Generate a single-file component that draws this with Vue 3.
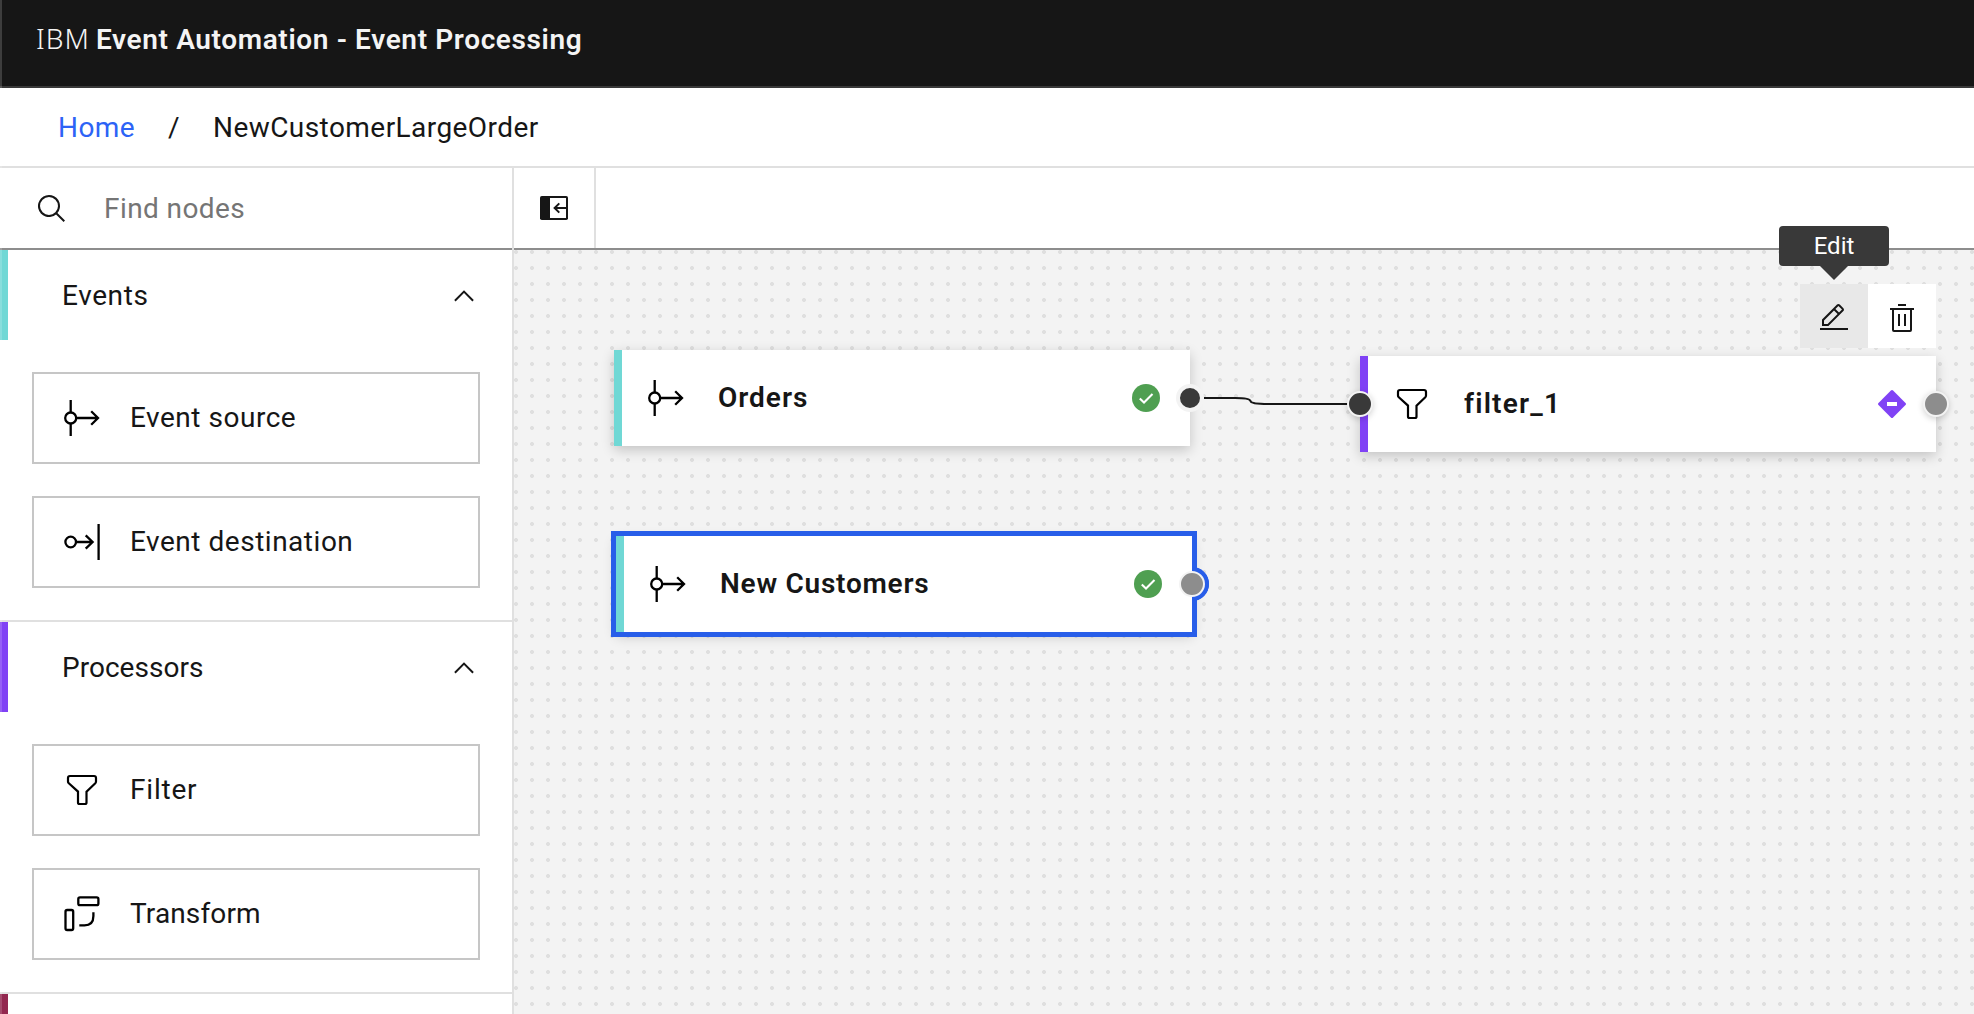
<script setup>
import { h } from 'vue'

const icons = {
  source: ['M6.7 0V12.6M6.7 23.4V36M12.4 18H33.6M27.2 11.3L34 18L27.2 24.7', { cx: 6.7, cy: 18, r: 5.5 }],
  destination: ['M12.4 18H28M21.7 11.3L28.6 18L21.7 24.7M34.6 0V36', { cx: 6.7, cy: 18, r: 5.3 }],
  filter: ['M6 4H30Q32 4 32 6V9.6Q32 10.6 31.3 11.3L22.5 19.6V30.5Q22.5 32 21 32H15.5Q14 32 14 30.5V19.6L4.8 11.3Q4 10.6 4 9.6V6Q4 4 6 4Z'],
  transform: ['M16 1.3H32.6Q34.4 1.3 34.4 3V7.4Q34.4 9.1 32.6 9.1H16Q14.3 9.1 14.3 7.4V3Q14.3 1.3 16 1.3ZM3.2 14H7.5Q9.2 14 9.2 15.7V32.3Q9.2 34 7.5 34H3.2Q1.5 34 1.5 32.3V15.7Q1.5 14 3.2 14ZM29.4 16.2V20Q29.4 29.3 20.5 29.3H15.3'],
}

const NodeIcon = ({ name }) =>
  h('svg', { width: 36, height: 36, viewBox: '0 0 36 36', fill: 'none', stroke: '#000', 'stroke-width': name === 'filter' ? 2.2 : 2.3 }, [
    h('path', { d: icons[name][0] }),
    icons[name][1] ? h('circle', icons[name][1]) : null,
  ])
NodeIcon.props = ['name']

const sections = [
  {
    title: 'Events',
    kind: 'events',
    items: [
      { label: 'Event source', icon: 'source' },
      { label: 'Event destination', icon: 'destination' },
    ],
  },
  {
    title: 'Processors',
    kind: 'processors',
    items: [
      { label: 'Filter', icon: 'filter' },
      { label: 'Transform', icon: 'transform' },
    ],
  },
]
</script>

<template>
  <div class="app">
    <header class="header">
      <span class="brand">IBM</span><strong class="product">Event Automation - Event Processing</strong>
    </header>

    <nav class="breadcrumb">
      <a class="home">Home</a>
      <span class="slash">/</span>
      <span class="current">NewCustomerLargeOrder</span>
    </nav>

    <div class="body">
      <aside class="sidebar">
        <div class="search">
          <svg width="32" height="32" viewBox="0 0 32 32" fill="#161616">
            <path d="M29 27.586l-7.552-7.552a11.018 11.018 0 1 0-1.414 1.414L27.586 29ZM4 13a9 9 0 1 1 9 9A9.01 9.01 0 0 1 4 13Z" />
          </svg>
          <span class="placeholder">Find nodes</span>
        </div>

        <section v-for="s in sections" :key="s.title" class="section" :class="s.kind">
          <div class="section-head">
            <span class="section-title">{{ s.title }}</span>
            <svg width="20" height="12" viewBox="0 0 20 12" fill="none" stroke="#161616" stroke-width="2">
              <path d="M.9 10.7L10 1.6L19.1 10.7" />
            </svg>
          </div>
          <div class="items">
            <div v-for="i in s.items" :key="i.label" class="item">
              <NodeIcon :name="i.icon" />
              <span class="item-label" :class="i.icon">{{ i.label }}</span>
            </div>
          </div>
        </section>

        <section class="section more"><div class="section-head"></div></section>
      </aside>

      <main class="main">
        <div class="toolbar">
          <button class="toggle">
            <svg width="32" height="32" viewBox="0 0 32 32">
              <rect x="2" y="4" width="28" height="24" rx="1.8" fill="#161616" />
              <rect x="12" y="6" width="16" height="20" fill="#fff" />
              <path d="M28 16H16.8M21.3 11.4L16.6 16L21.3 20.6" fill="none" stroke="#161616" stroke-width="2" />
            </svg>
          </button>
        </div>

        <div class="canvas">
          <svg class="edge" width="150" height="16" viewBox="0 0 150 16" fill="none" stroke="#161616" stroke-width="2">
            <path d="M0 5H31Q46 5 46.5 8T64 11H145" />
          </svg>

          <div class="node events orders">
            <NodeIcon name="source" />
            <span class="node-label">Orders</span>
            <svg class="status" width="28" height="28" viewBox="0 0 28 28">
              <circle cx="14" cy="14" r="14" fill="#4f9f51" />
              <path d="M7.8 14.4L12 18.5L20.5 10" fill="none" stroke="#fff" stroke-width="2.1" />
            </svg>
            <i class="port out connected"></i>
          </div>

          <div class="halo"></div>
          <div class="node events customers">
            <NodeIcon name="source" />
            <span class="node-label">New Customers</span>
            <svg class="status" width="28" height="28" viewBox="0 0 28 28">
              <circle cx="14" cy="14" r="14" fill="#4f9f51" />
              <path d="M7.8 14.4L12 18.5L20.5 10" fill="none" stroke="#fff" stroke-width="2.1" />
            </svg>
            <i class="port out"></i>
          </div>

          <div class="node processors filter-node">
            <i class="port in connected"></i>
            <NodeIcon name="filter" />
            <span class="node-label">filter_1</span>
            <svg class="status" width="28" height="28" viewBox="0 0 28 28">
              <path d="M12.9.5Q14-.5 15.1.5L27.5 12.9Q28.5 14 27.5 15.1L15.1 27.5Q14 28.5 12.9 27.5L.5 15.1Q-.5 14 .5 12.9Z" fill="#8042f5" />
              <path d="M9 12H19V16H9Z" fill="#fff" />
            </svg>
            <i class="port out"></i>
          </div>

          <div class="actions">
            <button class="action active">
              <svg width="32" height="32" viewBox="0 0 32 32" fill="#161616">
                <path d="M2 26H30V28H2ZM25.4 9c.8-.8.8-2 0-2.8l-3.6-3.6c-.8-.8-2-.8-2.8 0l-15 15V24h6.4L25.4 9ZM20.4 4L24 7.6l-3 3L17.4 7l3-3ZM6 22v-3.6l10-10 3.6 3.6-10 10H6Z" />
              </svg>
            </button>
            <button class="action">
              <svg width="32" height="32" viewBox="0 0 32 32" fill="#161616">
                <path d="M12 12H14V24H12ZM18 12H20V24H18ZM4 6V8H6V28a2 2 0 0 0 2 2H24a2 2 0 0 0 2-2V8H28V6ZM8 28V8H24V28ZM12 2H20V4H12Z" />
              </svg>
            </button>
          </div>
          <div class="tooltip">Edit</div>
        </div>
      </main>
    </div>
    <div class="window-edge"></div>
  </div>
</template>

<style>
body {
  margin: 0;
  overflow: hidden;
}
</style>

<style scoped>
.app {
  position: relative;
  display: flex;
  flex-direction: column;
  height: 1014px;
  overflow: hidden;
  background: #fff;
  color: #161616;
  font: 400 28px/36px Roboto, "Liberation Sans", sans-serif;
  white-space: nowrap;
}
button {
  display: flex;
  align-items: center;
  justify-content: center;
  padding: 0;
  border: 0;
  background: #fff;
}
svg {
  display: block;
  flex: none;
}
.header {
  display: flex;
  align-items: baseline;
  box-sizing: border-box;
  flex: none;
  height: 88px;
  padding: 20px 0 0 36px;
  border-bottom: 2px solid #393939;
  background: #161616;
  color: #f4f4f4;
}
.brand {
  width: 60px;
  font-family: "Noto Sans", sans-serif;
  font-weight: 300;
  letter-spacing: 1px;
}
.product {
  font-weight: 600;
  letter-spacing: 0.63px;
}
.breadcrumb {
  display: flex;
  align-items: center;
  box-sizing: border-box;
  flex: none;
  height: 80px;
  padding: 1px 0 0 58px;
  border-bottom: 2px solid #e0e0e0;
  letter-spacing: 0.44px;
}
.home {
  width: 110px;
  color: #2d63f6;
}
.slash {
  width: 45px;
}
.body {
  display: flex;
  flex: 1;
  min-height: 0;
}
.sidebar {
  box-sizing: border-box;
  flex: none;
  width: 514px;
  border-right: 2px solid #e0e0e0;
  overflow: hidden;
}
.search {
  display: flex;
  align-items: center;
  gap: 35px;
  box-sizing: border-box;
  height: 82px;
  padding-left: 36px;
  border-bottom: 2px solid #8d8d8d;
}
.search svg {
  margin-top: 1px;
}
.placeholder {
  margin: 1px 0 0 1px;
  color: #757575;
  letter-spacing: 0.42px;
}
.section + .section {
  border-top: 2px solid #e0e0e0;
}
.section-head {
  display: flex;
  align-items: center;
  justify-content: space-between;
  box-sizing: border-box;
  height: 90px;
  padding: 0 38px 0 54px;
  border-left: 8px solid;
}
.events .section-head {
  border-color: #70d8d5;
}
.processors .section-head {
  border-color: #8042f5;
}
.more .section-head {
  border-color: #932850;
}
.section-title {
  margin-top: 1px;
  letter-spacing: 0.6px;
}
.processors .section-title {
  letter-spacing: 0.03px;
}
.section-head svg {
  margin-top: 1px;
}
.items {
  display: flex;
  flex-direction: column;
  gap: 32px;
  padding: 32px;
}
.item {
  display: flex;
  align-items: center;
  gap: 30px;
  box-sizing: border-box;
  height: 92px;
  padding-left: 30px;
  border: 2px solid #c6c6c6;
}
.item-label {
  letter-spacing: 0.52px;
}
.item-label.filter {
  letter-spacing: 0.8px;
}
.item-label.transform {
  letter-spacing: 0.13px;
}
.main {
  display: flex;
  flex: 1;
  flex-direction: column;
  min-width: 0;
}
.toolbar {
  display: flex;
  box-sizing: border-box;
  flex: none;
  height: 82px;
  border-bottom: 2px solid #8d8d8d;
}
.toggle {
  box-sizing: border-box;
  width: 82px;
  border-right: 2px solid #e0e0e0;
}
.canvas {
  position: relative;
  flex: 1;
  background: #f3f3f3 radial-gradient(circle at 8px 8px, #dfdfdf 1.6px, transparent 2.3px) -6px -6px / 16px 16px;
}
.edge {
  position: absolute;
  left: 690px;
  top: 143px;
}
.node {
  position: absolute;
  display: flex;
  align-items: center;
  box-sizing: border-box;
  width: 576px;
  height: 96px;
  padding: 0 30px 0 26px;
  border-left: 8px solid;
  background: #fff;
  box-shadow: 0 4px 12px rgba(0, 0, 0, 0.2);
}
.node.events {
  border-color: #70d8d5;
}
.node.processors {
  border-color: #8042f5;
}
.orders {
  left: 100px;
  top: 100px;
}
.customers {
  left: 102px;
  top: 286px;
  outline: 5px solid #285ee9;
}
.filter-node {
  left: 846px;
  top: 106px;
}
.node-label {
  flex: 1;
  margin-left: 34px;
  font-weight: 600;
  letter-spacing: 0.75px;
}
.orders .node-label {
  letter-spacing: 0.99px;
}
.filter-node .node-label {
  letter-spacing: 1.2px;
}
.port {
  position: absolute;
  top: 35px;
  box-sizing: border-box;
  width: 26px;
  height: 26px;
  border: 2px solid #f3f3f3;
  border-radius: 50%;
  background: #8d8d8d;
  box-shadow: 0 2px 6px rgba(0, 0, 0, 0.18);
}
.port.out {
  right: -13px;
}
.port.in {
  left: -21px;
}
.port.connected {
  background: #393939;
}
.orders .port {
  top: 34px;
  right: -14px;
  width: 28px;
  height: 28px;
  border-width: 4px;
  box-shadow: none;
}
.halo {
  position: absolute;
  left: 661px;
  top: 317px;
  width: 34px;
  height: 34px;
  border-radius: 50%;
  background: #285ee9;
}
.customers::after {
  content: "";
  position: absolute;
  top: 31px;
  right: -17px;
  width: 17px;
  height: 34px;
  border-radius: 0 17px 17px 0;
  background: #285ee9;
}
.customers .port {
  z-index: 1;
  border-width: 2.5px;
  box-shadow: none;
}
.actions {
  position: absolute;
  left: 1286px;
  top: 34px;
  display: flex;
}
.action {
  width: 68px;
  height: 64px;
}
.action svg {
  margin-top: 3px;
}
.action.active {
  background: #e8e8e8;
}
.tooltip {
  position: absolute;
  left: 1265px;
  top: -24px;
  width: 110px;
  height: 40px;
  border-radius: 4px;
  background: #393939;
  color: #fff;
  font-size: 24px;
  line-height: 40px;
  text-align: center;
}
.tooltip::after {
  content: "";
  position: absolute;
  left: 41px;
  top: 40px;
  border: 14px solid transparent;
  border-top-color: #393939;
  border-bottom: 0;
}
.window-edge {
  position: absolute;
  inset: 0 auto 0 0;
  width: 2px;
  background: rgba(255, 255, 255, 0.17);
}
</style>
